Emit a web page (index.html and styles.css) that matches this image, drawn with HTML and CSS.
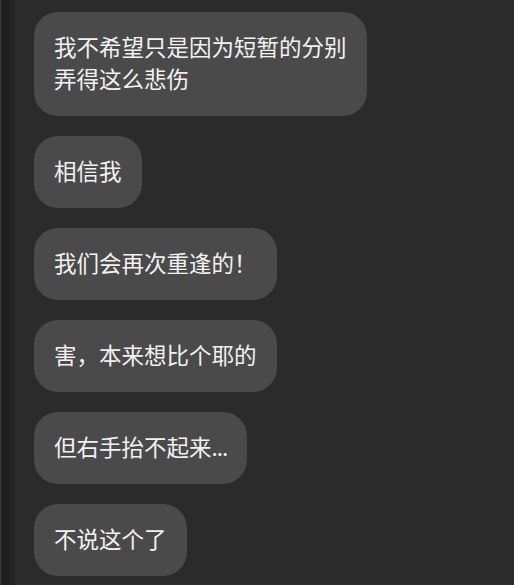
FILE: index.html
```html
<!DOCTYPE html>
<html lang="zh-CN">
<head>
    <meta charset="UTF-8">
    <meta name="viewport" content="width=device-width, initial-scale=1.0">
    <title>聊天</title>
    <link rel="stylesheet" href="styles.css">
</head>
<body>

<div class="screen">
    <div class="side-strip"></div>

    <div class="chat">
        <div class="bubble">我不希望只是因为短暂的分别<br>弄得这么悲伤</div>
        <div class="bubble">相信我</div>
        <div class="bubble">我们会再次重逢的！</div>
        <div class="bubble">害，本来想比个耶的</div>
        <div class="bubble">但右手抬不起来<span class="dots">...</span></div>
        <div class="bubble">不说这个了</div>
    </div>
</div>

</body>
</html>
```

FILE: styles.css
```css
* {
    margin: 0;
    padding: 0;
    box-sizing: border-box;
}

html, body {
    height: 100%;
}

body {
    font-family: "Noto Sans CJK SC", "Noto Sans", sans-serif;
    background: #2b2b2b;
    color: #f2f2f2;
    overflow: hidden;
}

.screen {
    display: flex;
    height: 100%;
}

.side-strip {
    width: 15px;
    flex-shrink: 0;
    background: #1f1f1f;
    border-left: 1px solid #3c3c3c;
    border-right: 4px solid #242424;
}

.chat {
    flex: 1;
    display: flex;
    flex-direction: column;
    align-items: flex-start;
    gap: 20px;
    padding: 12px 0 0 19px;
}

.bubble {
    background: #4a4a4a;
    border-radius: 24px;
    padding: 18px 20px 22px;
    font-size: 22.5px;
    line-height: 32px;
    white-space: nowrap;
}

.bubble .dots {
    letter-spacing: -1px;
}
```
